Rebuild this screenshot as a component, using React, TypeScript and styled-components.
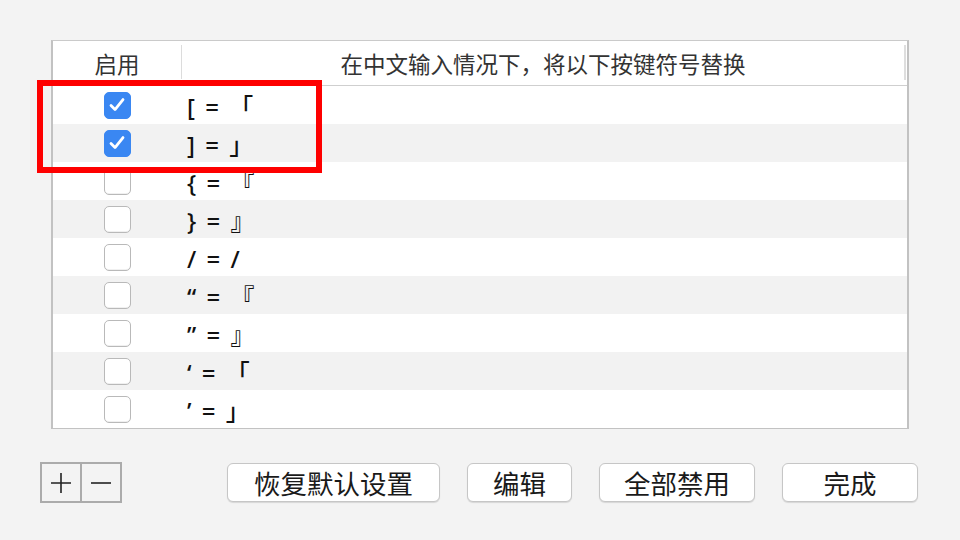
import React from "react";
import { styled, createGlobalStyle } from "styled-components";

const GlobalStyle = createGlobalStyle`
  html, body {
    margin: 0;
    padding: 0;
    background: #f3f3f3;
  }
  body {
    font-family: "Noto Sans CJK SC", "Noto Sans", sans-serif;
    color: #222;
  }
`;

const rules = [
  { text: "[ = 「", on: true },
  { text: "] = 」", on: true },
  { text: "{ = 『", on: false },
  { text: "} = 』", on: false },
  { text: "/ = /", on: false },
  { text: "“ = 『", on: false },
  { text: "” = 』", on: false },
  { text: "‘ = 「", on: false },
  { text: "’ = 」", on: false },
];

const Check = ({ on }: { on: boolean }) => (
  <Box $on={on}>
    {on && (
      <svg width="20" height="20" viewBox="0 0 20 20">
        <path
          d="M4 10.6 L8 14.6 L16 4.6"
          fill="none"
          stroke="#fff"
          strokeWidth="2.8"
          strokeLinecap="round"
          strokeLinejoin="round"
        />
      </svg>
    )}
  </Box>
);

const App = () => {
  return (
    <Page>
      <GlobalStyle />
      <Table>
        <Header>
          <HeadCell $w={130}>启用</HeadCell>
          <HeadDivider />
          <HeadCell $grow>在中文输入情况下，将以下按键符号替换</HeadCell>
          <HeadEdge />
        </Header>
        {rules.map((r, i) => (
          <Row key={i} $odd={i % 2 === 1}>
            <CheckCell>
              <Check on={r.on} />
            </CheckCell>
            <TextCell>{r.text}</TextCell>
          </Row>
        ))}
        <Highlight />
      </Table>
      <Toolbar>
        <PlusMinus>
          <PMButton>
            <svg width="24" height="24" viewBox="0 0 24 24">
              <path d="M12 2 V22 M2 12 H22" stroke="#222" strokeWidth="1.6" />
            </svg>
          </PMButton>
          <PMButton $last>
            <svg width="24" height="24" viewBox="0 0 24 24">
              <path d="M2 12 H22" stroke="#222" strokeWidth="1.6" />
            </svg>
          </PMButton>
        </PlusMinus>
        <Buttons>
          <Button $w={213}>恢复默认设置</Button>
          <Button $w={105}>编辑</Button>
          <Button $w={156}>全部禁用</Button>
          <Button $w={136}>完成</Button>
        </Buttons>
      </Toolbar>
    </Page>
  );
};

export default App;

const Page = styled.div`
  width: 960px;
  height: 540px;
  box-sizing: border-box;
  padding: 40px 42px 0 40px;
  display: flex;
  flex-direction: column;
`;

const Table = styled.div`
  position: relative;
  margin-left: 11px;
  width: 858px;
  height: 389px;
  box-sizing: border-box;
  background: #fff;
  border: 2px solid #c2c2c2;
  border-top: 1px solid #cacaca;
  display: flex;
  flex-direction: column;
`;

const Header = styled.div`
  height: 44px;
  flex: none;
  display: flex;
  align-items: center;
  border-bottom: 1px solid #cfcfcf;
  position: relative;
`;

const HeadCell = styled.div<{ $w?: number; $grow?: boolean }>`
  ${(p) => (p.$w ? `width: ${p.$w - 2}px;` : "")}
  ${(p) => (p.$grow ? "flex: 1;" : "")}
  text-align: center;
  font-size: 22.5px;
  color: #333;
  line-height: 44px;
`;

const HeadDivider = styled.div`
  width: 1px;
  height: 34px;
  margin-top: 4px;
  align-self: flex-start;
  background: #dcdcdc;
`;

const HeadEdge = styled.div`
  width: 2px;
  height: 35px;
  align-self: flex-start;
  margin-top: 4px;
  margin-right: 1px;
  background: #dedede;
`;

const Row = styled.div<{ $odd: boolean }>`
  height: 38px;
  flex: none;
  display: flex;
  align-items: center;
  background: ${(p) => (p.$odd ? "#f2f2f2" : "#fff")};
`;

const CheckCell = styled.div`
  width: 128px;
  display: flex;
  justify-content: center;
`;

const Box = styled.div<{ $on: boolean }>`
  width: 27px;
  height: 27px;
  box-sizing: border-box;
  border-radius: 5px;
  display: flex;
  align-items: center;
  justify-content: center;
  background: ${(p) => (p.$on ? "#3a87f2" : "#fff")};
  border: 1px solid ${(p) => (p.$on ? "#3a87f2" : "#b9b9b9")};
  box-shadow: ${(p) => (p.$on ? "none" : "inset 0 -1px 0 rgba(0,0,0,0.06)")};
`;

const TextCell = styled.div`
  padding-left: 6px;
  padding-top: 4px;
  font-family: "Noto Sans", "Noto Sans CJK SC", sans-serif;
  font-size: 24px;
  font-weight: 500;
  letter-spacing: 2px;
  color: #111;
  white-space: pre;
  line-height: 38px;
`;

const Highlight = styled.div`
  position: absolute;
  left: -16px;
  top: 39px;
  width: 285px;
  height: 93px;
  box-sizing: border-box;
  border: 6px solid #fe0000;
  pointer-events: none;
`;

const Toolbar = styled.div`
  margin-top: 33px;
  display: flex;
  align-items: center;
`;

const PlusMinus = styled.div`
  display: flex;
  width: 82px;
  height: 41px;
  box-sizing: border-box;
  border: 2px solid #ababab;
  background: #f3f3f3;
`;

const PMButton = styled.div<{ $last?: boolean }>`
  flex: 1;
  display: flex;
  align-items: center;
  justify-content: center;
  border-right: ${(p) => (p.$last ? "none" : "2px solid #ababab")};
`;

const Buttons = styled.div`
  margin-left: auto;
  display: flex;
  gap: 27px;
`;

const Button = styled.div<{ $w: number }>`
  width: ${(p) => p.$w}px;
  height: 39px;
  box-sizing: border-box;
  border-radius: 6px;
  background: #fff;
  border: 1px solid #c6c6c6;
  box-shadow: 0 1px 1px rgba(0, 0, 0, 0.12);
  display: flex;
  align-items: center;
  justify-content: center;
  font-size: 26.5px;
  color: #1a1a1a;
`;
